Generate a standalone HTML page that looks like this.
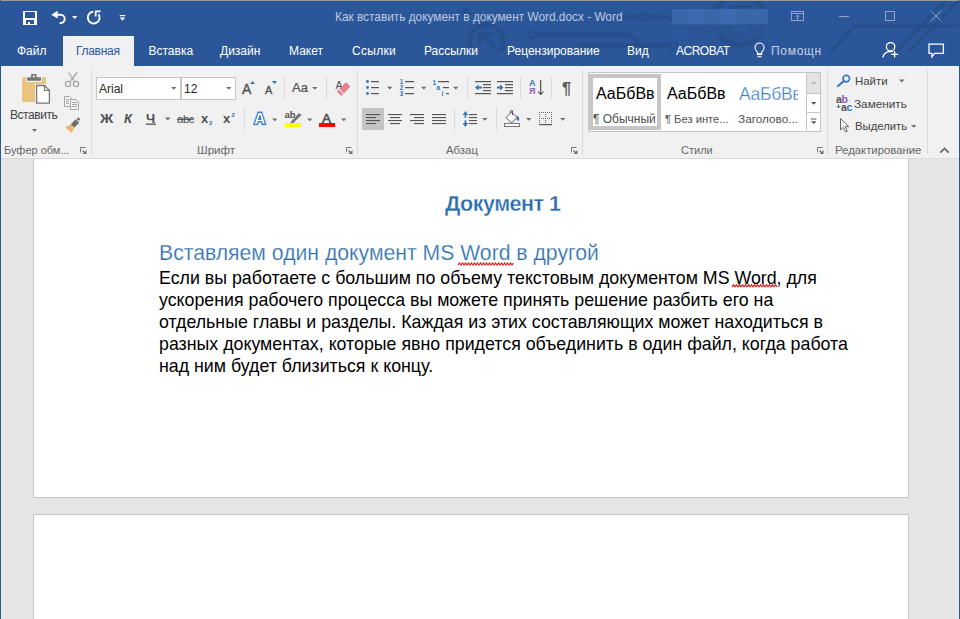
<!DOCTYPE html>
<html><head><meta charset="utf-8">
<style>
*{margin:0;padding:0;box-sizing:border-box}
html,body{width:960px;height:619px;overflow:hidden}
body{position:relative;background:#E5E5E5;font-family:"Liberation Sans",sans-serif}
.a{position:absolute;white-space:nowrap}
#title{left:0;top:0;width:960px;height:66px;background:#2B579A}
#topline{left:1px;top:0;width:958px;height:1px;background:#9C9C9C}
.tab{color:#fff;font-size:12px;top:43px;line-height:16px}
#ribbon{left:1px;top:66px;width:958px;height:92px;background:#F1F1F1}
#rbline{left:1px;top:158px;width:958px;height:1px;background:#DADADA}
.lb{font-size:11px;color:#666;line-height:14px}
.rt{font-size:12px;color:#444;line-height:16px}
.sep{width:1px;background:#DADADA}
.page{background:#fff;border:1px solid #C6C6C6}
#lb{left:0;top:0;width:1px;height:619px;background:#2B579A}
#rb{left:959px;top:0;width:1px;height:619px;background:#2B579A}
</style></head><body>
<!-- canvas pages -->
<div class="a page" style="left:33px;top:150px;width:876px;height:348px"></div>
<div class="a page" style="left:33px;top:514px;width:876px;height:120px"></div>

<!-- document text -->
<div class="a" style="left:445px;top:192px;font-size:21.5px;font-weight:bold;color:#2A6CAD;line-height:24px;letter-spacing:-0.5px;-webkit-text-stroke:0.3px #fff">Документ 1</div>
<div class="a" style="left:159px;top:241px;font-size:21.2px;color:#2A6CAD;line-height:24px;-webkit-text-stroke:0.25px #fff">Вставляем один документ MS Word в другой</div>
<div class="a" style="left:159px;top:267px;font-size:17.8px;color:#000;line-height:22px">Если вы работаете с большим по объему текстовым документом MS Word, для<br>ускорения рабочего процесса вы можете принять решение разбить его на<br>отдельные главы и разделы. Каждая из этих составляющих может находиться в<br>разных документах, которые явно придется объединить в один файл, когда работа<br>над ним будет близиться к концу.</div>

<svg class="a" style="left:0;top:0" width="960" height="619"><path d="M458 265L459.5 263.0L461.0 265.0L462.5 263.0L464.0 265.0L465.5 263.0L467.0 265.0L468.5 263.0L470.0 265.0L471.5 263.0L473.0 265.0L474.5 263.0L476.0 265.0L477.5 263.0L479.0 265.0L480.5 263.0L482.0 265.0L483.5 263.0L485.0 265.0L486.5 263.0L488.0 265.0L489.5 263.0L491.0 265.0L492.5 263.0L494.0 265.0L495.5 263.0L497.0 265.0L498.5 263.0L500.0 265.0L501.5 263.0L503.0 265.0L504.5 263.0L506.0 265.0L507.5 263.0L509.0 265.0L510.5 263.0L512.0 265.0L513.5 263.0" stroke="#F01818" stroke-width="1.2" fill="none"/><path d="M732 286.8L733.5 284.8L735.0 286.8L736.5 284.8L738.0 286.8L739.5 284.8L741.0 286.8L742.5 284.8L744.0 286.8L745.5 284.8L747.0 286.8L748.5 284.8L750.0 286.8L751.5 284.8L753.0 286.8L754.5 284.8L756.0 286.8L757.5 284.8L759.0 286.8L760.5 284.8L762.0 286.8L763.5 284.8L765.0 286.8L766.5 284.8L768.0 286.8L769.5 284.8L771.0 286.8L772.5 284.8L774.0 286.8L775.5 284.8L777.0 286.8" stroke="#F01818" stroke-width="1.2" fill="none"/></svg>
<!-- title bar -->
<div class="a" id="title"></div>

<svg class="a" style="left:0;top:0" width="960" height="66" viewBox="0 0 960 66">
 <defs><clipPath id="pc"><rect x="0" y="0" width="960" height="52.5"/></clipPath></defs>
 <g stroke="#264F8C" stroke-width="4" fill="none" clip-path="url(#pc)">
  <circle cx="486.4" cy="42" r="16.9" stroke-width="4.6"/>
  <path d="M494.5 47.5L479 32.5"/>
  <path d="M493.5 34.2H479.2V44.5"/>
  <path d="M536.5 34.7H630L650 53"/>
  <path d="M578 45.2H669"/>
  <path d="M622 16.7H640.5M648 16.7H667Q671 17 674 22"/>
  <circle cx="739.5" cy="19.7" r="25" stroke-width="6"/>
  <rect x="730" y="6.5" width="23" height="30" rx="4" stroke-width="4"/>
  <path d="M830.6 51.6L855 26.3H958" stroke-width="3.6"/>
  <path d="M896.3 51.6L946 0" stroke-width="3.8"/>
  <path d="M909.5 51.6L959 0" stroke-width="3.8"/>
 </g>
 <g stroke="#264F8C" stroke-width="2.6" fill="none">
  <circle cx="532.3" cy="34.7" r="3.4"/>
  <circle cx="673.3" cy="45.2" r="3.4"/>
  <circle cx="644.2" cy="16.7" r="3.4"/>
  <circle cx="467" cy="12.5" r="2.6"/>
 </g>
 <rect x="672" y="9" width="16" height="15.6" fill="#3A66AA"/>
 <rect x="672" y="24.6" width="16" height="13.8" fill="#2D5899" fill-opacity="0.6"/>
 <rect x="688" y="9" width="16" height="15.6" fill="#3D6AAE"/>
 <rect x="688" y="24.6" width="16" height="13.8" fill="#2A5494" fill-opacity="0.6"/>
 <rect x="704" y="9" width="16" height="15.6" fill="#3A67AB"/>
 <rect x="704" y="24.6" width="16" height="13.8" fill="#2B5595" fill-opacity="0.6"/>
 <rect x="720" y="9" width="16" height="15.6" fill="#3D6BAF"/>
 <rect x="720" y="24.6" width="16" height="13.8" fill="#2A5393" fill-opacity="0.6"/>
 <rect x="736" y="9" width="16" height="15.6" fill="#3A66A9"/>
 <rect x="736" y="24.6" width="16" height="13.8" fill="#2C5697" fill-opacity="0.6"/>
 <rect x="752" y="9" width="16" height="15.6" fill="#3B67AA"/>
 <rect x="752" y="24.6" width="16" height="13.8" fill="#2B5696" fill-opacity="0.6"/>
 <!-- window controls -->
 <g stroke="#8DA3C8" stroke-width="1" fill="none">
  <rect x="791.5" y="11.5" width="12" height="9"/>
  <path d="M791.5 13.5H803.5M797.5 20V15M795.5 17L797.5 15L799.5 17"/>
  <path d="M839 16.5H849"/>
  <rect x="885.5" y="11.5" width="9" height="9"/>
  <path d="M931 11L941 21M941 11L931 21"/>
 </g>
 <!-- QAT -->
 <path d="M23 11H37V25H23Z M25 12V18H35V12Z M26 20V24H28V22H30V24H34V20Z" fill="#fff" fill-rule="evenodd"/>
 <path d="M55.5 14.7H60.5A4.2 4.2 0 0 1 60.5 23.1H59.5" stroke="#fff" stroke-width="1.9" fill="none"/>
 <path d="M51.3 14.7L57.6 10.8V18.6Z" fill="#fff"/>
 <path d="M72 16h5.4l-2.7 3.1z" fill="#fff"/>
 <path d="M93.2 11.7A5.9 5.9 0 1 0 98.6 14.3" stroke="#fff" stroke-width="1.9" fill="none"/>
 <path d="M95.7 16.6V11.4H100.5" stroke="#fff" stroke-width="1.8" fill="none"/>
 <rect x="119.7" y="15" width="5.5" height="1.2" fill="#fff"/>
 <path d="M119.7 17.5h5.5l-2.75 3.3z" fill="#fff"/>
 <!-- lightbulb -->
 <path d="M757.4 54V52Q755 50 755 47.6A4.55 4.55 0 0 1 764.1 47.6Q764.1 50 761.7 52V54Z" stroke="#fff" stroke-width="1.1" fill="none"/>
 <rect x="757" y="53.3" width="5.1" height="1.8" fill="#fff"/>
 <path d="M757.6 56.7H761.5" stroke="#fff" stroke-width="1.1"/>
 <!-- person -->
 <circle cx="890.6" cy="46.8" r="4.2" stroke="#fff" stroke-width="1.3" fill="none"/>
 <path d="M882.8 57.5Q884.3 51.6 890.5 51.4Q892.8 51.5 894.3 52.6" stroke="#fff" stroke-width="1.3" fill="none"/>
 <path d="M891 54.3H898.2M894.6 50.8V57.8" stroke="#2B579A" stroke-width="3.4"/><path d="M891.2 54.3H898M894.6 51V57.6" stroke="#fff" stroke-width="1.3"/>
 <!-- comment -->
 <path d="M929 44H943.4V53.3H934.6L931.9 56.8V53.3H929Z" stroke="#fff" stroke-width="1.25" fill="none" stroke-linejoin="miter"/>
</svg>

<div class="a" id="topline"></div>
<div class="a" style="left:335px;top:9px;font-size:11.85px;color:#BDC9DE;line-height:16px">Как вставить документ в документ Word.docx - Word</div>

<!-- tabs -->
<div class="a" style="left:63px;top:36px;width:71px;height:30px;background:#F1F1F1"></div>
<div class="a tab" style="left:17px">Файл</div>
<div class="a tab" style="left:76px;color:#2B579A;letter-spacing:-0.3px">Главная</div>
<div class="a tab" style="left:148.5px">Вставка</div>
<div class="a tab" style="left:220px">Дизайн</div>
<div class="a tab" style="left:289px">Макет</div>
<div class="a tab" style="left:352px;letter-spacing:0.3px">Ссылки</div>
<div class="a tab" style="left:424px">Рассылки</div>
<div class="a tab" style="left:507px">Рецензирование</div>
<div class="a tab" style="left:627px">Вид</div>
<div class="a tab" style="left:676px;letter-spacing:-0.5px">ACROBAT</div>
<div class="a tab" style="left:771px;color:#C5D0E3;letter-spacing:0.7px">Помощн</div>

<!-- ribbon -->
<div class="a" id="ribbon"></div>
<div class="a" id="rbline"></div>

<!-- ribbon content -->
<div class="a rt" style="left:10px;top:107px;font-size:12px;letter-spacing:-0.45px">Вставить</div>
<div class="a lb" style="left:4px;top:143px">Буфер обм...</div>
<div class="a lb" style="left:197px;top:143px;font-size:11.6px">Шрифт</div>
<div class="a lb" style="left:446px;top:143px;font-size:11.4px">Абзац</div>
<div class="a lb" style="left:681px;top:143px">Стили</div>
<div class="a lb" style="left:835px;top:143px;font-size:11.35px">Редактирование</div>
<!-- font boxes -->
<div class="a" style="left:96px;top:77px;width:140px;height:23px;background:#fff;border:1px solid #C6C6C6"></div>
<div class="a" style="left:180px;top:77px;width:2px;height:23px;background:#C6C6C6"></div>
<div class="a rt" style="left:99px;top:81px;color:#262626">Arial</div>
<div class="a rt" style="left:184px;top:81px;color:#262626">12</div>
<div class="a" style="left:292px;top:80px;font-size:13px;color:#505050;line-height:16px;-webkit-text-stroke:0.2px #505050">Aa</div>
<div class="a" style="left:100px;top:111px;font-size:13px;font-weight:bold;color:#505050;line-height:16px;transform:scaleX(1.13);transform-origin:0 0">Ж</div>
<div class="a" style="left:124px;top:111px;font-size:13px;font-weight:bold;font-style:italic;color:#505050;line-height:16px">К</div>
<div class="a" style="left:146px;top:111px;font-size:13px;font-weight:bold;color:#505050;line-height:16px">Ч</div>
<div class="a" style="left:177px;top:111px;font-size:11.5px;color:#505050;line-height:16px;letter-spacing:-0.5px">abc</div>
<div class="a" style="left:201px;top:111px;font-size:13px;font-weight:bold;color:#505050;line-height:16px">x</div>
<div class="a" style="left:223px;top:111px;font-size:13px;font-weight:bold;color:#505050;line-height:16px">x</div>
<!-- styles gallery -->
<div class="a" style="left:588px;top:72px;width:233px;height:60px;background:#fff;border:1px solid #C6C6C6"></div>
<div class="a" style="left:806px;top:72px;width:1px;height:60px;background:#C6C6C6"></div>
<div class="a" style="left:807px;top:73px;width:13px;height:20px;background:#E3E3E3"></div>
<div class="a" style="left:806px;top:93px;width:15px;height:1px;background:#C6C6C6"></div>
<div class="a" style="left:806px;top:112px;width:15px;height:1px;background:#C6C6C6"></div>
<div class="a" style="left:589px;top:74px;width:72px;height:56px;border:4px solid #C6C6C6"></div>
<div class="a" style="left:596px;top:85px;font-size:16px;color:#000;line-height:18px">АаБбВв</div>
<div class="a" style="left:667px;top:85px;font-size:16px;color:#000;line-height:18px">АаБбВв</div>
<div class="a" style="left:739px;top:85px;width:59px;height:20px;overflow:hidden;font-size:17.5px;color:#3A7DC8;line-height:18px;letter-spacing:-0.3px;-webkit-text-stroke:0.3px #fff">АаБбВв</div>
<div class="a" style="left:593px;top:111px;font-size:12px;color:#505050;line-height:16px">¶ Обычный</div>
<div class="a" style="left:665px;top:111px;font-size:11.2px;color:#505050;line-height:16px">¶ Без инте...</div>
<div class="a" style="left:738px;top:111px;font-size:11.8px;color:#505050;line-height:16px">Заголово...</div>
<!-- editing -->
<div class="a rt" style="left:855px;top:73px;font-size:11.4px">Найти</div>
<div class="a rt" style="left:854px;top:96px;font-size:11.75px">Заменить</div>
<div class="a rt" style="left:855px;top:118px;font-size:11.3px">Выделить</div>
<div class="a" style="left:836px;top:93px;font-size:10.5px;font-weight:bold;color:#505050;line-height:12px;letter-spacing:-0.3px">a<span style="color:#8E58B6">b</span></div>
<div class="a" style="left:841px;top:101px;font-size:10.5px;font-weight:bold;color:#505050;line-height:12px;letter-spacing:-0.3px">a<span style="color:#2E75B6">c</span></div>
<div class="a" style="left:529px;top:78px;font-size:9px;font-weight:bold;color:#2E75B6;line-height:10px">A</div>
<div class="a" style="left:529px;top:86px;font-size:9px;font-weight:bold;color:#8E58B6;line-height:10px">Я</div>
<div class="a" style="left:562px;top:79px;font-size:16.5px;font-weight:bold;color:#5A5A5A;line-height:18px">¶</div>
<svg class="a" style="left:0;top:0" width="960" height="160"><g fill="#2E75B6" font-family="Liberation Sans" font-weight="bold" font-size="6.3"><text x="399.8" y="84">1</text><text x="399.8" y="90">2</text><text x="399.8" y="96">3</text></g></svg>
<svg class="a" style="left:0;top:0" width="960" height="160" viewBox="0 0 960 160">
 <g fill="#DADADA">
  <rect x="91" y="70" width="1" height="84"/>
  <rect x="357" y="70" width="1" height="84"/>
  <rect x="582" y="70" width="1" height="84"/>
  <rect x="827" y="70" width="1" height="84"/>
  <rect x="927" y="70" width="1" height="84"/>
  <rect x="284" y="77" width="1" height="22"/>
  <rect x="326" y="77" width="1" height="22"/>
  <rect x="244" y="108" width="1" height="22"/>
  <rect x="467" y="77" width="1" height="22"/>
  <rect x="520" y="77" width="1" height="22"/>
  <rect x="551" y="77" width="1" height="22"/>
  <rect x="454" y="108" width="1" height="22"/>
  <rect x="496" y="108" width="1" height="22"/>
 </g>
 <!-- paste -->
 <rect x="22" y="77" width="24" height="25" rx="1.5" fill="#EAC47E"/>
 <rect x="26" y="76" width="16" height="6" fill="#F1F1F1"/>
 <rect x="27" y="77.3" width="14" height="3.5" rx="0.8" fill="#767676"/>
 <path d="M31 77.5V75A1 1 0 0 1 32 74H35.6A1 1 0 0 1 36.6 75V77.5Z" fill="#767676"/>
 <rect x="33" y="75.4" width="1.8" height="1.8" fill="#F1F1F1"/>
 <path d="M35 84H45L51 90V105H35Z" fill="#F1F1F1"/>
 <path d="M36.6 85.5H44.5L49.4 90.4V103.2H36.6Z" fill="#fff" stroke="#777" stroke-width="1.3" stroke-linejoin="miter"/>
 <path d="M44.5 85.5V90.4H49.4" fill="none" stroke="#777" stroke-width="1.1"/>
 <path d="M32 129h5l-2.5 3z" fill="#6E6E6E"/>
 <!-- cut -->
 <g stroke="#A8A8A8" stroke-width="1.3" fill="none">
  <path d="M68.5 72.5L74.5 81M77 72.5L70.5 81"/>
  <circle cx="68" cy="84" r="2.6"/><circle cx="76" cy="84" r="2.6"/>
 </g>
 <!-- copy -->
 <g stroke="#A8A8A8" stroke-width="1" fill="#F1F1F1">
  <path d="M64.5 96.5H69.5L71.5 98.5V106.5H64.5Z"/>
  <path d="M70.5 99.5H76L78.5 102V109.5H70.5Z"/>
  <path d="M66 99.5h3M66 101.5h3M66 103.5h3M72 102.5h5M72 104.5h5M72 106.5h5"/>
 </g>
 <!-- format painter -->
 <path d="M73.94 128.1L70.4 124.56L65.3 127.3L71.7 133.2Z" fill="#E9B766"/>
 <path d="M79.24 122.8L75.7 119.26L70.76 124.2L74.3 127.74Z" fill="#6E6E6E"/>
 <path d="M80.4 119.3L78.3 117.2L76.6 118.9L78.7 121Z" fill="#6E6E6E"/>
 <!-- dropdown arrows font -->
 <g fill="#6E6E6E">
  <path d="M171 87h5.5l-2.75 2.8z"/>
  <path d="M226 87h5.5l-2.75 2.8z"/>
  <path d="M312 87h5.5l-2.75 2.8z"/>
  <path d="M165 117.6h5.5l-2.75 2.8z"/>
  <path d="M272 118.4h5.5l-2.75 2.8z"/>
  <path d="M307 118.4h5.5l-2.75 2.8z"/>
  <path d="M341 118.4h5.5l-2.75 2.8z"/>
  <path d="M387 86.8h5.5l-2.75 2.8z"/>
  <path d="M421 86.8h5.5l-2.75 2.8z"/>
  <path d="M453 86.8h5.5l-2.75 2.8z"/>
  <path d="M482 118h5.5l-2.75 2.8z"/>
  <path d="M526 118h5.5l-2.75 2.8z"/>
  <path d="M560 118h5.5l-2.75 2.8z"/>
  <path d="M899 79.6h5.5l-2.75 2.8z"/>
  <path d="M911 125h5.5l-2.75 2.8z"/>
 </g>
 <!-- grow/shrink -->
 <text x="242" y="94" font-family="Liberation Sans" font-size="14" fill="#505050" stroke="#505050" stroke-width="0.35">A</text>
 <text x="265" y="94" font-family="Liberation Sans" font-size="11" fill="#505050" stroke="#505050" stroke-width="0.35">A</text>
 <path d="M250 84h5l-2.5-3z" fill="#2E75B6"/>
 <path d="M272 81h5l-2.5 3z" fill="#2E75B6"/>
 <!-- clear formatting -->
 <text x="335.5" y="89" font-family="Liberation Sans" font-size="10.5" fill="#505050">A</text>
 <g transform="rotate(-45 343.6 89)"><rect x="337" y="85.8" width="13.2" height="6.4" rx="1" fill="#E67F8F"/><rect x="339.8" y="85.8" width="0.9" height="6.4" fill="#F1F1F1"/></g>
 <!-- underline, sub/sup -->
 <rect x="146" y="123.5" width="10" height="1.3" fill="#505050"/>
 <rect x="177" y="118.6" width="16.5" height="1.3" fill="#505050"/>
 <text x="209" y="124.7" font-family="Liberation Sans" font-weight="bold" font-size="6" fill="#2E75B6">2</text>
 <text x="231.5" y="117" font-family="Liberation Sans" font-weight="bold" font-size="6" fill="#2E75B6">2</text>
 <!-- text effects A -->
 <path d="M258.1 112.4H261.6L265.6 124.4H262.3L261.5 121.6H258.2L257.4 124.4H254.1Z M259.85 115.6L261 119.4H258.7Z" fill="none" stroke="#C9DBEF" stroke-width="3.2" stroke-linejoin="round"/>
 <path d="M258.1 112.4H261.6L265.6 124.4H262.3L261.5 121.6H258.2L257.4 124.4H254.1Z M259.85 115.6L261 119.4H258.7Z" fill="#fff" fill-rule="evenodd" stroke="#3B7CC0" stroke-width="1.15" stroke-linejoin="round"/>
 <path d="M259.85 115.6L261 119.4H258.7Z" fill="#3B7CC0"/>
 <!-- highlight -->
 <text x="284.5" y="118.2" font-family="Liberation Sans" font-weight="bold" font-size="9.5" fill="#505050">ab</text>
 <path d="M290 122.5L299 112.8L301.8 115L292.5 124Z" fill="#6E6E6E" stroke="#F1F1F1" stroke-width="0.6"/>
 <rect x="285" y="123" width="16" height="4" fill="#FFFF00"/>
 <!-- font color -->
 <text x="322" y="122.6" font-family="Liberation Sans" font-size="13.5" fill="#505050" stroke="#505050" stroke-width="0.6">A</text>
 <rect x="319" y="123" width="16" height="4" fill="#FF0000"/>
 <!-- launchers -->
 <g stroke="#7A7A7A" fill="none" stroke-width="1">
  <path d="M80.5 152.5V147.5H85.5"/><path d="M346.5 152.5V147.5H351.5"/><path d="M571.5 152.5V147.5H576.5"/><path d="M817.5 152.5V147.5H822.5"/>
 </g>
 <g fill="#6E6E6E"><path d="M86.5 150V154H82.5Z"/><path d="M82.5 150.5L85.5 153.5" stroke="#6E6E6E" stroke-width="1.1"/><path d="M352.5 150V154H348.5Z"/><path d="M348.5 150.5L351.5 153.5" stroke="#6E6E6E" stroke-width="1.1"/><path d="M577.5 150V154H573.5Z"/><path d="M573.5 150.5L576.5 153.5" stroke="#6E6E6E" stroke-width="1.1"/><path d="M823.5 150V154H819.5Z"/><path d="M819.5 150.5L822.5 153.5" stroke="#6E6E6E" stroke-width="1.1"/></g>
 <!-- bullets -->
 <g fill="#2E75B6">
  <circle cx="367.5" cy="81.5" r="1.4"/><circle cx="367.5" cy="87.5" r="1.4"/><circle cx="367.5" cy="93.5" r="1.4"/>
 </g>
 <g fill="#555">
  <rect x="371" y="81" width="8" height="1.2"/><rect x="371" y="87" width="8" height="1.2"/><rect x="371" y="93" width="8" height="1.2"/>
  <rect x="405" y="81" width="9" height="1.2"/><rect x="405" y="87" width="9" height="1.2"/><rect x="405" y="93" width="9" height="1.2"/>
  <rect x="438" y="81" width="11" height="1.2"/><rect x="443" y="87" width="6" height="1.2"/><rect x="446" y="93" width="3" height="1.2"/>
 </g>
 <g fill="#2E75B6" font-family="Liberation Sans" font-weight="bold">
  <text x="432.5" y="84.5" font-size="6.5">1</text><text x="436.5" y="90" font-size="6.5">a</text><text x="441.5" y="96" font-size="6.5">i</text>
 </g>
 <!-- indent -->
 <g fill="#555">
  <rect x="475" y="81" width="16" height="1.2"/><rect x="483" y="84" width="8" height="1.2"/><rect x="483" y="87" width="8" height="1.2"/><rect x="483" y="90" width="8" height="1.2"/><rect x="475" y="93" width="16" height="1.2"/>
  <rect x="497" y="81" width="16" height="1.2"/><rect x="505" y="84" width="8" height="1.2"/><rect x="505" y="87" width="8" height="1.2"/><rect x="505" y="90" width="8" height="1.2"/><rect x="497" y="93" width="16" height="1.2"/>
 </g>
 <path d="M475 87.5L478.5 84.5V86.5H482V88.5H478.5V90.5Z" fill="#2E75B6"/>
 <path d="M503.5 87.5L500 84.5V86.5H497V88.5H500V90.5Z" fill="#2E75B6"/>
 <!-- sort arrow -->
 <path d="M540.7 80V94.5M538 91.5L540.7 94.5L543.4 91.5" stroke="#444" stroke-width="1.1" fill="none"/>
 <!-- align -->
 <rect x="362" y="108" width="22" height="22" fill="#C5C5C5"/>
 <g fill="#555">
  <rect x="366" y="114" width="14" height="1.1"/><rect x="366" y="117" width="10" height="1.1"/><rect x="366" y="120" width="14" height="1.1"/><rect x="366" y="123" width="10" height="1.1"/>
  <rect x="388" y="114" width="14" height="1.1"/><rect x="390" y="117" width="10" height="1.1"/><rect x="388" y="120" width="14" height="1.1"/><rect x="390" y="123" width="10" height="1.1"/>
  <rect x="410" y="114" width="14" height="1.1"/><rect x="414" y="117" width="10" height="1.1"/><rect x="410" y="120" width="14" height="1.1"/><rect x="414" y="123" width="10" height="1.1"/>
  <rect x="432" y="114" width="14" height="1.1"/><rect x="432" y="117" width="14" height="1.1"/><rect x="432" y="120" width="14" height="1.1"/><rect x="432" y="123" width="14" height="1.1"/>
  <rect x="469" y="114" width="8" height="1.1"/><rect x="469" y="117" width="8" height="1.1"/><rect x="469" y="120" width="8" height="1.1"/><rect x="469" y="123" width="8" height="1.1"/>
 </g>
 <!-- line spacing arrows -->
 <path d="M465.4 114V117.8M465.4 120.3V124" stroke="#3478BA" stroke-width="1.6" fill="none"/>
 <path d="M462.6 115L465.4 110.9L468.2 115Z M462.6 123L465.4 127.1L468.2 123Z" fill="#3478BA"/>
 <!-- shading -->
 <path d="M506 117.5L511.5 112L517 117.5L511.5 123Z" fill="#fff" stroke="#555" stroke-width="1"/>
 <path d="M510.5 113V110.8H512.5V115" stroke="#555" stroke-width="1" fill="none"/>
 <path d="M517 115.5Q520.5 117.5 518.5 121.5L516.5 119Z" fill="#2E75B6"/>
 <rect x="504.5" y="123.5" width="15" height="3" fill="#fff" stroke="#777" stroke-width="1"/>
 <!-- borders -->
 <g fill="#666">
  <path d="M539 112h13v1h-13zM539 118h13v1h-13z" fill="none"/>
 </g>
 <g stroke="#666" stroke-width="1" stroke-dasharray="1 1" fill="none">
  <path d="M539 112.5H552M539 118.5H552M539.5 112V124M545.5 112V124M551.5 112V124"/>
 </g>
 <rect x="539" y="124" width="13" height="1.2" fill="#555"/>
 <!-- find -->
 <circle cx="846.3" cy="78.6" r="3.3" stroke="#3B7CC0" stroke-width="1.7" fill="none"/>
 <path d="M843.8 81.2L838 86" stroke="#3B7CC0" stroke-width="2.2" stroke-linecap="round"/>
 <!-- replace arrow -->
 <path d="M838.5 104.5V107.5M836.8 106L838.5 108L840.2 106" stroke="#2E75B6" stroke-width="1" fill="none"/>
 <!-- select pointer -->
 <path d="M840.5 118.5V130L843.3 127.3L845.5 132L847.3 131.2L845.2 126.6H848.8Z" fill="#fff" stroke="#666" stroke-width="1" stroke-linejoin="round"/>
 <!-- gallery scroll arrows -->
 <path d="M811 84h5.5l-2.75-2.8z" fill="#B5B5B5"/>
 <path d="M811 102h5.5l-2.75 2.8z" fill="#555"/>
 <rect x="811" y="118.5" width="5.5" height="1" fill="#555"/>
 <path d="M811 121.3h5.5l-2.75 2.8z" fill="#555"/>
 <!-- collapse -->
 <path d="M940.3 152.6L944.5 148.4L948.7 152.6" stroke="#666" stroke-width="1.7" fill="none"/>
</svg>


<div class="a" id="lb"></div>
<div class="a" id="rb"></div>
</body></html>
